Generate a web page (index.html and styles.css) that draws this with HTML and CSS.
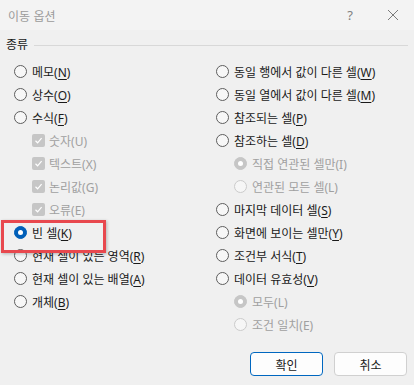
FILE: index.html
```html
<!doctype html>
<html lang="ko">
  <head>
    <meta charset="UTF-8" />
    <meta name="viewport" content="width=device-width, initial-scale=1.0" />
    <title>이동 옵션</title>
    <link rel="stylesheet" href="styles.css">
  </head>

  <body>
    <div class="dialog">
      <header class="titlebar">
        <span class="title">이동 옵션</span>
        <span class="help">?</span>
        <svg class="close" width="12" height="12" viewBox="0 0 12 12">
          <path d="M1 1 L11 11 M11 1 L1 11" stroke="#7a7a7a" stroke-width="1" fill="none" />
        </svg>
      </header>

      <section class="group">
        <div class="legend"><span>종류</span><span class="rule"></span></div>

        <div class="columns">
          <ul class="col left">
            <li class="opt"><span class="radio"></span><span>메모(<u>N</u>)</span></li>
            <li class="opt"><span class="radio"></span><span>상수(<u>O</u>)</span></li>
            <li class="opt"><span class="radio"></span><span>수식(<u>F</u>)</span></li>
            <li class="opt sub off"><span class="check"><svg width="9" height="9" viewBox="0 0 9 9"><path d="M1.5 4.8 L3.6 6.8 L7.6 2.2" stroke="#fff" stroke-width="1.2" fill="none" /></svg></span><span>숫자(U)</span></li>
            <li class="opt sub off"><span class="check"><svg width="9" height="9" viewBox="0 0 9 9"><path d="M1.5 4.8 L3.6 6.8 L7.6 2.2" stroke="#fff" stroke-width="1.2" fill="none" /></svg></span><span>텍스트(X)</span></li>
            <li class="opt sub off"><span class="check"><svg width="9" height="9" viewBox="0 0 9 9"><path d="M1.5 4.8 L3.6 6.8 L7.6 2.2" stroke="#fff" stroke-width="1.2" fill="none" /></svg></span><span>논리값(G)</span></li>
            <li class="opt sub off"><span class="check"><svg width="9" height="9" viewBox="0 0 9 9"><path d="M1.5 4.8 L3.6 6.8 L7.6 2.2" stroke="#fff" stroke-width="1.2" fill="none" /></svg></span><span>오류(E)</span></li>
            <li class="opt marked"><span class="radio on"></span><span>빈 셀(<u>K</u>)</span></li>
            <li class="opt"><span class="radio"></span><span>현재 셀이 있는 영역(<u>R</u>)</span></li>
            <li class="opt"><span class="radio"></span><span>현재 셀이 있는 배열(<u>A</u>)</span></li>
            <li class="opt"><span class="radio"></span><span>개체(<u>B</u>)</span></li>
          </ul>

          <ul class="col right">
            <li class="opt"><span class="radio"></span><span>동일 행에서 값이 다른 셀(<u>W</u>)</span></li>
            <li class="opt"><span class="radio"></span><span>동일 열에서 값이 다른 셀(<u>M</u>)</span></li>
            <li class="opt"><span class="radio"></span><span>참조되는 셀(<u>P</u>)</span></li>
            <li class="opt"><span class="radio"></span><span>참조하는 셀(<u>D</u>)</span></li>
            <li class="opt sub off"><span class="radio dim on"></span><span>직접 연관된 셀만(I)</span></li>
            <li class="opt sub off"><span class="radio dim"></span><span>연관된 모든 셀(L)</span></li>
            <li class="opt"><span class="radio"></span><span>마지막 데이터 셀(<u>S</u>)</span></li>
            <li class="opt"><span class="radio"></span><span>화면에 보이는 셀만(<u>Y</u>)</span></li>
            <li class="opt"><span class="radio"></span><span>조건부 서식(<u>T</u>)</span></li>
            <li class="opt"><span class="radio"></span><span>데이터 유효성(<u>V</u>)</span></li>
            <li class="opt sub off"><span class="radio dim on"></span><span>모두(L)</span></li>
            <li class="opt sub off"><span class="radio dim"></span><span>조건 일치(E)</span></li>
          </ul>
        </div>
      </section>

      <footer class="buttons">
        <button class="btn primary">확인</button>
        <button class="btn">취소</button>
      </footer>
    </div>
  </body>
</html>
```

FILE: styles.css
```css
* {
  box-sizing: border-box;
}

body {
  margin: 0;
  background: #f0f0f0;
  font-family: "Noto Sans", "Noto Sans CJK KR", sans-serif;
  font-size: 12px;
  color: #1a1a1a;
}

.dialog {
  width: 414px;
  height: 385px;
  display: flex;
  flex-direction: column;
}

.titlebar {
  height: 30px;
  background: #f3f3f3;
  display: flex;
  align-items: center;
  padding: 0 15px 0 8px;
  color: #9b9b9b;

  & .title {
    flex: 1;
    font-family: "Noto Sans CJK KR", sans-serif;
  }

  & .help {
    font-size: 13px;
    color: #808080;
    margin-right: 34px;
  }
}

.group {
  padding: 6px 6px 0 6px;
}

.legend {
  display: flex;
  align-items: center;
  gap: 6px;
  height: 18px;
  line-height: 18px;

  & .rule {
    flex: 1;
    height: 1px;
    background: #d8d8d8;
  }
}

.columns {
  display: grid;
  grid-template-columns: 210px 1fr;
  margin-top: 6px;
}

.col {
  list-style: none;
  margin: 0;
  padding: 0;
}

.left {
  padding-left: 8px;
}

.right {
  padding-left: 0;
}

.opt {
  display: flex;
  align-items: center;
  gap: 5px;
  height: 23px;
  white-space: nowrap;

  & u {
    text-underline-offset: 2px;
  }

  &.sub {
    padding-left: 18px;
  }

  &.off {
    color: #a0a0a0;
  }

  &.marked {
    position: relative;

    &::after {
      content: "";
      position: absolute;
      left: -13px;
      top: -1px;
      width: 99px;
      height: 27px;
      border: 3px solid #e8484e;
      box-shadow: 1px 1px 3px rgba(0, 0, 0, 0.25);
    }
  }
}

.radio {
  flex: none;
  width: 13px;
  height: 13px;
  border: 1px solid #5e5e5e;
  border-radius: 50%;
  background: #f7f7f7;
  display: flex;
  align-items: center;
  justify-content: center;

  &.on {
    background: #005fb8;
    border-color: #005fb8;

    &::before {
      content: "";
      width: 5px;
      height: 5px;
      border-radius: 50%;
      background: #fff;
    }
  }

  &.dim {
    border-color: #cbcbcb;
    background: #f6f6f6;
  }

  &.dim.on {
    background: #c6c6c6;
    border-color: #c6c6c6;
  }
}

.check {
  flex: none;
  width: 13px;
  height: 13px;
  border-radius: 2px;
  background: #c6c6c6;
  display: flex;
  align-items: center;
  justify-content: center;
  margin-right: -1px;
}

.buttons {
  margin-top: auto;
  display: flex;
  justify-content: flex-end;
  gap: 11px;
  padding: 0 7px 9px 0;
}

.btn {
  width: 73px;
  height: 24px;
  font-family: "Noto Sans CJK KR", sans-serif;
  font-size: 12px;
  color: #1a1a1a;
  background: #fdfdfd;
  border: 1px solid #d0d0d0;
  border-radius: 4px;
  padding: 0;

  &.primary {
    border-color: #0067c0;
  }
}
```
